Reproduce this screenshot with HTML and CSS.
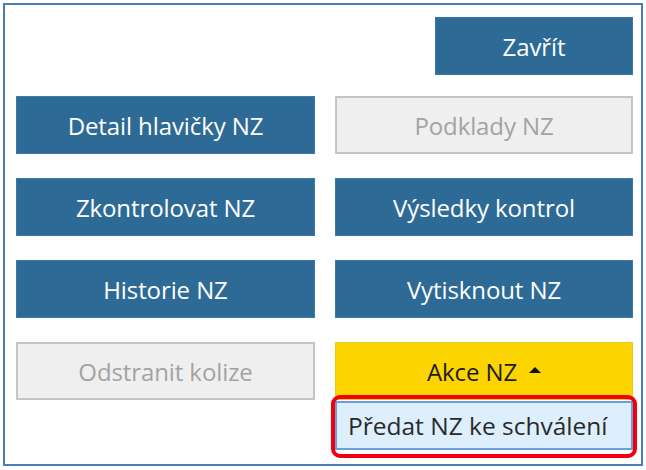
FILE: index.html
```html
<!DOCTYPE html>
<html lang="cs">
<head>
<meta charset="utf-8">
<title>Akce NZ</title>
<link rel="stylesheet" href="styles.css">
</head>
<body>
<div class="panel">
  <div class="top-row">
    <button class="btn primary close">Zavřít</button>
  </div>
  <div class="grid">
    <button class="btn primary">Detail hlavičky NZ</button>
    <button class="btn disabled">Podklady NZ</button>
    <button class="btn primary">Zkontrolovat NZ</button>
    <button class="btn primary">Výsledky kontrol</button>
    <button class="btn primary">Historie NZ</button>
    <button class="btn primary">Vytisknout NZ</button>
    <button class="btn disabled">Odstranit kolize</button>
    <div class="menu-wrap">
      <button class="btn accent">Akce NZ <span class="caret"></span></button>
      <div class="menu">
        <div class="menu-item">Předat NZ ke schválení</div>
        <div class="highlight"></div>
      </div>
    </div>
  </div>
</div>
</body>
</html>
```

FILE: styles.css
```css
* { box-sizing: border-box; }
html, body { margin: 0; padding: 0; background: #ffffff; }
body { font-family: "Open Sans", "Noto Sans", sans-serif; }

.panel {
  margin: 3px 0 0 3px;
  width: 640px;
  height: 463px;
  border: 2px solid #4a7ebb;
  padding: 12px 8px 0 11px;
}

.top-row {
  display: flex;
  justify-content: flex-end;
  margin-bottom: 21px;
}

.grid {
  display: grid;
  grid-template-columns: 299px 298px;
  column-gap: 20px;
  grid-auto-rows: 58px;
  row-gap: 24px;
}

.btn {
  font-family: "Open Sans", "Noto Sans", sans-serif;
  font-size: 24px;
  height: 58px;
  width: 100%;
  border: 1px solid transparent;
  padding: 0;
  margin: 0;
  display: flex;
  align-items: center;
  justify-content: center;
  letter-spacing: -0.1px;
}

.close { width: 198px; }

.primary {
  background: #2e6a96;
  border-color: #3a7aa8;
  color: #ffffff;
}

.disabled {
  background: #efefef;
  border: 2px solid #c4c4c4;
  color: #a3a3a3;
}

.accent {
  background: #fcd400;
  border-color: #f0cc10;
  color: #1c1c1c;
}

.caret {
  display: inline-block;
  width: 0;
  height: 0;
  margin-left: 12px;
  margin-top: -2px;
  border-left: 6px solid transparent;
  border-right: 6px solid transparent;
  border-bottom: 6px solid #111111;
}

.menu-wrap { position: relative; }

.menu {
  position: absolute;
  left: 0;
  top: 59px;
  width: 100%;
}

.menu-item {
  height: 49px;
  background: #ddeefc;
  border: 2px solid #6aa2d8;
  color: #2a2a2a;
  font-size: 24.5px;
  display: flex;
  align-items: center;
  padding-left: 11px;
}

.highlight {
  position: absolute;
  left: -4px;
  top: -6px;
  right: -4px;
  bottom: -8px;
  border: 4px solid #f00010;
  border-radius: 9px;
}
```
